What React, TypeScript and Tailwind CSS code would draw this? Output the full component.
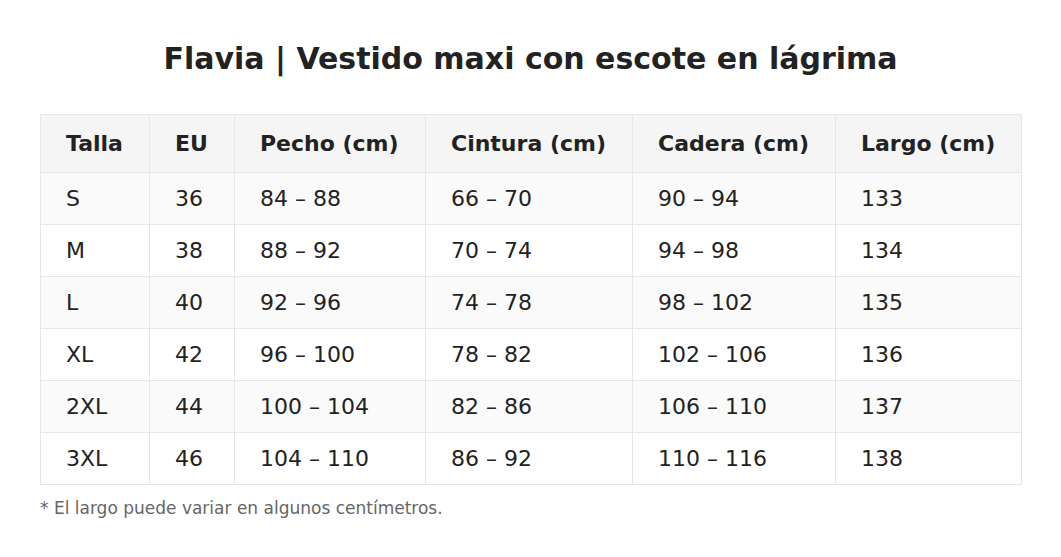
const rows = [
  ["S", "36", "84 – 88", "66 – 70", "90 – 94", "133"],
  ["M", "38", "88 – 92", "70 – 74", "94 – 98", "134"],
  ["L", "40", "92 – 96", "74 – 78", "98 – 102", "135"],
  ["XL", "42", "96 – 100", "78 – 82", "102 – 106", "136"],
  ["2XL", "44", "100 – 104", "82 – 86", "106 – 110", "137"],
  ["3XL", "46", "104 – 110", "86 – 92", "110 – 116", "138"],
];

const headers = ["Talla", "EU", "Pecho (cm)", "Cintura (cm)", "Cadera (cm)", "Largo (cm)"];
const widths = ["w-[109px]", "w-[85px]", "w-[191px]", "w-[207px]", "w-[203px]", "w-[186px]"];

export default function App() {
  return (
    <div className="min-h-[557px] bg-white px-10 pt-[42px] font-['DejaVu_Sans',sans-serif] text-[#222]">
      <h1 className="text-center text-[30px] font-bold leading-[34px]">
        Flavia | Vestido maxi con escote en lágrima
      </h1>
      <table className="mt-[38px] w-[981px] table-fixed border-collapse text-[22px]">
        <colgroup>
          {widths.map((w) => (
            <col key={w} className={w} />
          ))}
        </colgroup>
        <thead>
          <tr className="h-[58px] bg-[#f5f5f5]">
            {headers.map((h) => (
              <th key={h} className="border border-[#e6e6e6] pl-[25px] text-left font-bold">
                {h}
              </th>
            ))}
          </tr>
        </thead>
        <tbody>
          {rows.map((r, i) => (
            <tr key={r[0]} className={i % 2 === 0 ? "h-[52px] bg-[#fafafa]" : "h-[52px] bg-white"}>
              {r.map((c, j) => (
                <td key={j} className="border border-[#e6e6e6] pl-[25px]">
                  {c}
                </td>
              ))}
            </tr>
          ))}
        </tbody>
      </table>
      <p className="mt-[11px] text-[17px] leading-[24px] text-[#666]">
        * El largo puede variar en algunos centímetros.
      </p>
    </div>
  );
}
